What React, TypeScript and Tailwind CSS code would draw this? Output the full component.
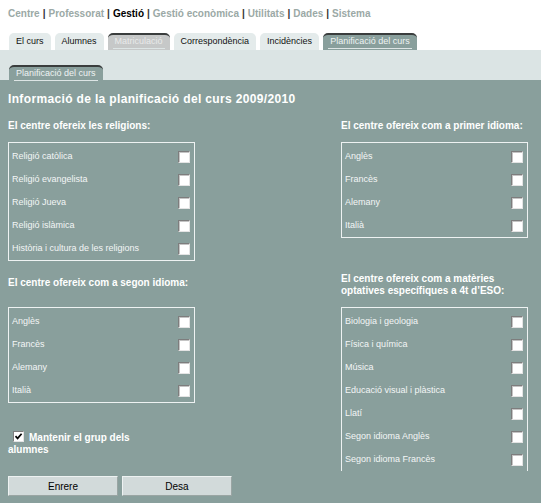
import React from "react";

const NAV = [
  { t: "Centre", active: false },
  { t: "Professorat", active: false },
  { t: "Gestió", active: true },
  { t: "Gestió econòmica", active: false },
  { t: "Utilitats", active: false },
  { t: "Dades", active: false },
  { t: "Sistema", active: false },
];

type TabKind = "light" | "disabled" | "active";
const TABS: { t: string; k: TabKind }[] = [
  { t: "El curs", k: "light" },
  { t: "Alumnes", k: "light" },
  { t: "Matriculació", k: "disabled" },
  { t: "Correspondència", k: "light" },
  { t: "Incidències", k: "light" },
  { t: "Planificació del curs", k: "active" },
];

function Check() {
  return (
    <span className="block w-[12px] h-[12px] bg-white border border-t-[#7d7d7d] border-l-[#7d7d7d] border-b-[#e4e4e4] border-r-[#e4e4e4] shadow-[inset_1px_1px_0_#c4c4c4]" />
  );
}

function Box({ items, open }: { items: string[]; open?: boolean }) {
  return (
    <div
      className={
        "border border-[#eef2f2] pt-[2px] " + (open ? "border-b-0" : "")
      }
    >
      {items.map((it) => (
        <div
          key={it}
          className="h-[23px] flex items-center justify-between pl-[3px] pr-[4px] text-[9px] text-[#f3f6f6]"
        >
          <span>{it}</span>
          <Check />
        </div>
      ))}
    </div>
  );
}

function Tab({ t, k }: { t: string; k: TabKind }) {
  if (k === "light")
    return (
      <div className="h-[17px] px-[7px] rounded-t-[5px] bg-[#e4ebeb] text-[9px] text-[#111] flex items-center">
        {t}
      </div>
    );
  const bg = k === "disabled" ? "bg-[#c6c8c8] text-[#e9eaea]" : "bg-[#899f9c] text-[#eef3f3]";
  return (
    <div
      className={
        "h-[17px] px-[5px] rounded-t-[5px] border-t-2 border-[#3a3d3d] text-[9px] flex items-end " +
        bg
      }
    >
      <span className="px-[2px] pb-[1px] mb-[1px] border-b border-[#dde5e5] leading-[12px]">
        {t}
      </span>
    </div>
  );
}

export default function App() {
  return (
    <div className="w-[541px] h-[503px] overflow-hidden bg-white font-['Liberation_Sans',Arial,sans-serif]">
      {/* top nav */}
      <div className="h-[26px] flex items-center pl-[8px] text-[10px] font-bold text-[#9ba9a6]">
        {NAV.map((n, i) => (
          <React.Fragment key={n.t}>
            {i > 0 && <span className="text-[#333] mx-[3px]">|</span>}
            <span className={n.active ? "text-black" : ""}>{n.t}</span>
          </React.Fragment>
        ))}
      </div>
      {/* tabs */}
      <div className="mt-[7px] flex items-end gap-[4px] pl-[9px]">
        {TABS.map((t) => (
          <Tab key={t.t} t={t.t} k={t.k} />
        ))}
      </div>
      {/* band */}
      <div className="h-[30px] bg-[#dbe4e4] pl-[9px] pt-[15px] flex items-start">
        <Tab t="Planificació del curs" k="active" />
      </div>
      {/* main */}
      <div className="h-[423px] bg-[#899f9c] px-[8px] pr-[13px] text-white">
        <h1 className="pt-[11px] h-[27px] leading-[16px] text-[12px] font-bold tracking-[0.35px]">
          Informació de la planificació del curs 2009/2010
        </h1>
        {/* row 1 */}
        <div className="mt-[12px] flex justify-between items-start">
          <div className="w-[187px]">
            <div className="h-[14px] leading-[14px] text-[10px] font-bold mb-[9px]">
              El centre ofereix les religions:
            </div>
            <Box
              items={[
                "Religió catòlica",
                "Religió evangelista",
                "Religió Jueva",
                "Religió islàmica",
                "Història i cultura de les religions",
              ]}
            />
          </div>
          <div className="w-[187px]">
            <div className="h-[14px] leading-[14px] text-[10px] font-bold mb-[9px]">
              El centre ofereix com a primer idioma:
            </div>
            <Box items={["Anglès", "Francès", "Alemany", "Italià"]} />
          </div>
        </div>
        {/* row 2 */}
        <div className="mt-[12px] flex justify-between items-center h-[24px] text-[10px] font-bold">
          <div className="w-[187px] leading-[12px] mb-[4px]">
            El centre ofereix com a segon idioma:
          </div>
          <div className="w-[187px] leading-[12px]">
            El centre ofereix com a matèries optatives específiques a 4t d’ESO:
          </div>
        </div>
        <div className="mt-[10px] flex justify-between items-start">
          <div className="w-[187px]">
            <Box items={["Anglès", "Francès", "Alemany", "Italià"]} />
            <div className="mt-[28px] w-[140px] text-[10px] font-bold leading-[12px]">
              <span className="inline-block align-[-1px] w-[11px] h-[11px] bg-white border border-t-[#7d7d7d] border-l-[#7d7d7d] border-b-[#e4e4e4] border-r-[#e4e4e4] ml-[5px] mr-[5px] relative">
                <svg viewBox="0 0 9 9" className="absolute inset-0 w-[9px] h-[9px]">
                  <path d="M1.5 4.2 L3.6 6.4 L7.6 1.8" stroke="#000" strokeWidth="1.7" fill="none" />
                </svg>
              </span>
              Mantenir el grup dels alumnes
            </div>
          </div>
          <div className="w-[187px]">
            <Box
              open
              items={[
                "Biologia i geologia",
                "Física i química",
                "Música",
                "Educació visual i plàstica",
                "Llatí",
                "Segon idioma Anglès",
                "Segon idioma Francès",
              ]}
            />
          </div>
        </div>
        <div className="mt-[5px] flex gap-[4px]">
          <button className="w-[110px] h-[20px] bg-[#d2dada] border border-t-[#eef2f2] border-l-[#eef2f2] border-b-[#9aa5a3] border-r-[#9aa5a3] text-[10px] text-black">
            Enrere
          </button>
          <button className="w-[110px] h-[20px] bg-[#d2dada] border border-t-[#eef2f2] border-l-[#eef2f2] border-b-[#9aa5a3] border-r-[#9aa5a3] text-[10px] text-black">
            Desa
          </button>
        </div>
      </div>
    </div>
  );
}
